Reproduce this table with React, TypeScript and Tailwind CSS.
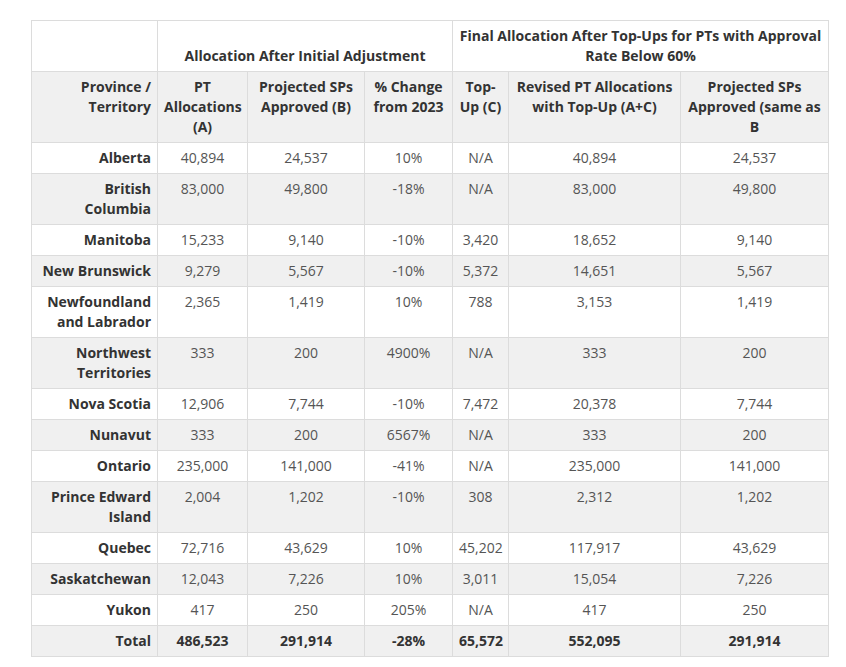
import React from 'react';

type Row = {
  name: string[];
  a: string;
  b: string;
  pct: string;
  c: string;
  ac: string;
  sameB: string;
};

const rows: Row[] = [
  { name: ['Alberta'], a: '40,894', b: '24,537', pct: '10%', c: 'N/A', ac: '40,894', sameB: '24,537' },
  { name: ['British', 'Columbia'], a: '83,000', b: '49,800', pct: '-18%', c: 'N/A', ac: '83,000', sameB: '49,800' },
  { name: ['Manitoba'], a: '15,233', b: '9,140', pct: '-10%', c: '3,420', ac: '18,652', sameB: '9,140' },
  { name: ['New Brunswick'], a: '9,279', b: '5,567', pct: '-10%', c: '5,372', ac: '14,651', sameB: '5,567' },
  { name: ['Newfoundland', 'and Labrador'], a: '2,365', b: '1,419', pct: '10%', c: '788', ac: '3,153', sameB: '1,419' },
  { name: ['Northwest', 'Territories'], a: '333', b: '200', pct: '4900%', c: 'N/A', ac: '333', sameB: '200' },
  { name: ['Nova Scotia'], a: '12,906', b: '7,744', pct: '-10%', c: '7,472', ac: '20,378', sameB: '7,744' },
  { name: ['Nunavut'], a: '333', b: '200', pct: '6567%', c: 'N/A', ac: '333', sameB: '200' },
  { name: ['Ontario'], a: '235,000', b: '141,000', pct: '-41%', c: 'N/A', ac: '235,000', sameB: '141,000' },
  { name: ['Prince Edward', 'Island'], a: '2,004', b: '1,202', pct: '-10%', c: '308', ac: '2,312', sameB: '1,202' },
  { name: ['Quebec'], a: '72,716', b: '43,629', pct: '10%', c: '45,202', ac: '117,917', sameB: '43,629' },
  { name: ['Saskatchewan'], a: '12,043', b: '7,226', pct: '10%', c: '3,011', ac: '15,054', sameB: '7,226' },
  { name: ['Yukon'], a: '417', b: '250', pct: '205%', c: 'N/A', ac: '417', sameB: '250' },
];

// shared cell look: thin grey rules, 20px lines, top aligned
const cell = 'border border-[#dcdcdc] px-[6px] pt-[5px] pb-[5px] align-top';

const App = () => {
  return (
    <div className="min-h-[667px] bg-white pt-[20px] pl-[31px] font-['Open_Sans',sans-serif] text-[14px] leading-[20px]">
      <table className="w-[797px] table-fixed border-collapse">
        <colgroup>
          <col className="w-[126px]" />
          <col className="w-[90px]" />
          <col className="w-[117px]" />
          <col className="w-[88px]" />
          <col className="w-[56px]" />
          <col className="w-[172px]" />
          <col className="w-[148px]" />
        </colgroup>
        <thead>
          {/* group headings */}
          <tr className="bg-white font-bold text-[#333]">
            <th className={cell} />
            <th colSpan={3} className={`${cell} !align-bottom text-center`}>
              Allocation After Initial Adjustment
            </th>
            <th colSpan={3} className={`${cell} text-center`}>
              Final Allocation After Top-Ups for PTs with Approval Rate Below 60%
            </th>
          </tr>
          {/* column headings */}
          <tr className="bg-[#f0f0f0] font-bold text-[#333]">
            <th className={`${cell} text-right`}>Province / Territory</th>
            <th className={`${cell} text-center`}>PT Allocations (A)</th>
            <th className={`${cell} text-center`}>Projected SPs Approved (B)</th>
            <th className={`${cell} text-center`}>% Change from 2023</th>
            <th className={`${cell} text-center`}>Top-Up (C)</th>
            <th className={`${cell} text-center`}>Revised PT Allocations with Top-Up (A+C)</th>
            <th className={`${cell} text-center`}>Projected SPs Approved (same as B</th>
          </tr>
        </thead>
        <tbody>
          {rows.map((r, i) => (
            <tr key={r.name.join(' ')} className={i % 2 === 1 ? 'bg-[#f0f0f0]' : 'bg-white'}>
              <td className={`${cell} text-right font-bold text-[#333]`}>
                {r.name.map((line, j) => (
                  <div key={j}>{line}</div>
                ))}
              </td>
              <td className={`${cell} text-center text-[#555]`}>{r.a}</td>
              <td className={`${cell} text-center text-[#555]`}>{r.b}</td>
              <td className={`${cell} text-center text-[#555]`}>{r.pct}</td>
              <td className={`${cell} text-center text-[#555]`}>{r.c}</td>
              <td className={`${cell} text-center text-[#555]`}>{r.ac}</td>
              <td className={`${cell} text-center text-[#555]`}>{r.sameB}</td>
            </tr>
          ))}
          <tr className="bg-[#f0f0f0] font-bold text-[#333]">
            <td className={`${cell} text-right`}>Total</td>
            <td className={`${cell} text-center`}>486,523</td>
            <td className={`${cell} text-center`}>291,914</td>
            <td className={`${cell} text-center`}>-28%</td>
            <td className={`${cell} text-center`}>65,572</td>
            <td className={`${cell} text-center`}>552,095</td>
            <td className={`${cell} text-center`}>291,914</td>
          </tr>
        </tbody>
      </table>
    </div>
  );
};

export default App;
